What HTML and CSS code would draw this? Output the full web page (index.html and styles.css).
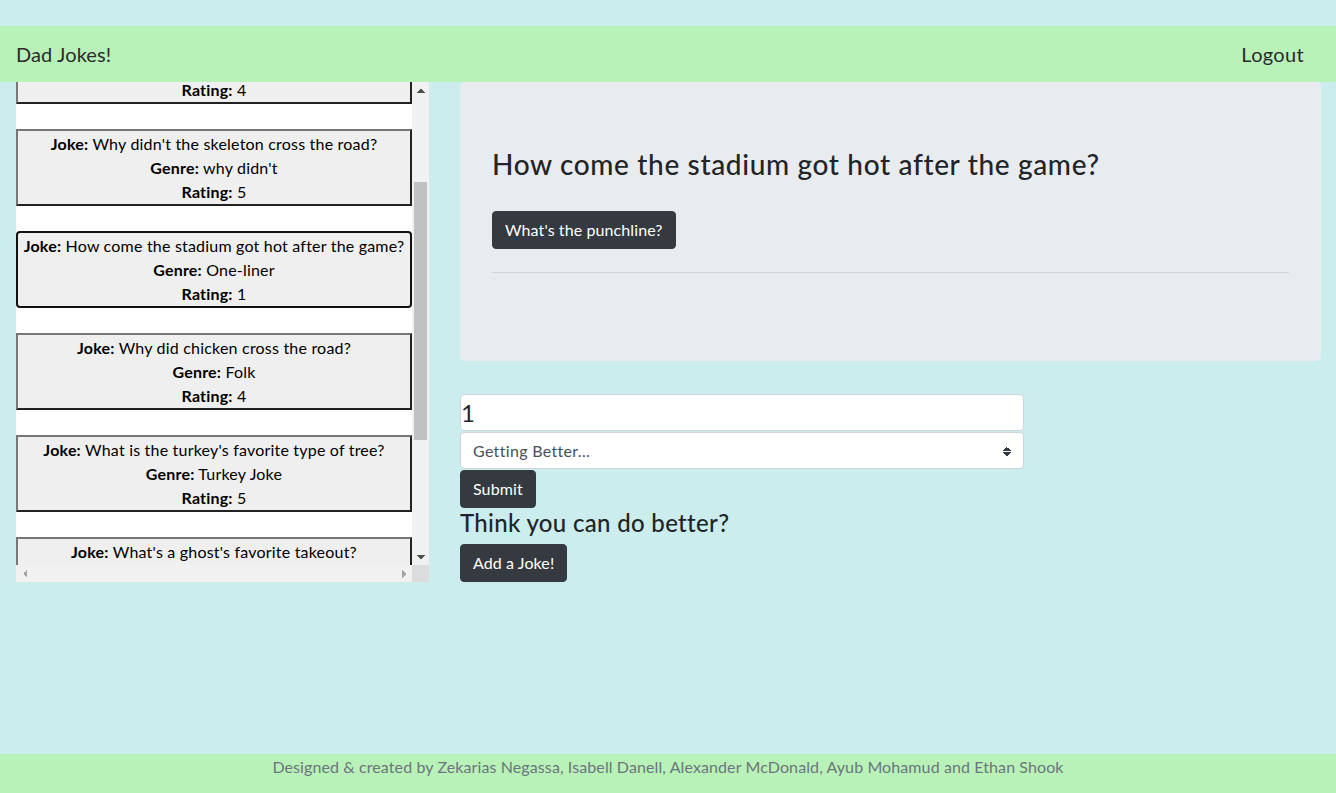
FILE: index.html
```html
<!DOCTYPE html>
<html lang="en">
<head>
<meta charset="utf-8">
<title>Dad Jokes!</title>
<link rel="stylesheet" href="styles.css">
</head>
<body>
<nav class="navbar">
  <a class="brand" href="#">Dad Jokes!</a>
  <a class="nav-link" href="#">Logout</a>
</nav>
<main class="page">
  <section class="list-box">
    <div class="joke-list" id="jokeList">
      <div class="joke-list-inner">
        <div class="joke-card">
          <div><b>Joke:</b> What do you call a fake noodle?</div>
          <div><b>Genre:</b> Pun</div>
          <div><b>Rating:</b> 4</div>
        </div>
        <div class="joke-card">
          <div><b>Joke:</b> Why didn't the skeleton cross the road?</div>
          <div><b>Genre:</b> why didn't</div>
          <div><b>Rating:</b> 5</div>
        </div>
        <div class="joke-card active">
          <div><b>Joke:</b> How come the stadium got hot after the game?</div>
          <div><b>Genre:</b> One-liner</div>
          <div><b>Rating:</b> 1</div>
        </div>
        <div class="joke-card">
          <div><b>Joke:</b> Why did chicken cross the road?</div>
          <div><b>Genre:</b> Folk</div>
          <div><b>Rating:</b> 4</div>
        </div>
        <div class="joke-card">
          <div><b>Joke:</b> What is the turkey's favorite type of tree?</div>
          <div><b>Genre:</b> Turkey Joke</div>
          <div><b>Rating:</b> 5</div>
        </div>
        <div class="joke-card">
          <div><b>Joke:</b> What's a ghost's favorite takeout?</div>
          <div><b>Genre:</b> Halloween</div>
          <div><b>Rating:</b> 3</div>
        </div>
        <div class="joke-card">
          <div><b>Joke:</b> Why don't eggs tell jokes?</div>
          <div><b>Genre:</b> Pun</div>
          <div><b>Rating:</b> 3</div>
        </div>
      </div>
    </div>
    <div class="vscroll">
      <span class="sb-btn up"></span>
      <div class="vtrack"><div class="vthumb"></div></div>
      <span class="sb-btn down"></span>
    </div>
    <div class="hscroll">
      <span class="sb-btn left"></span>
      <div class="htrack"></div>
      <span class="sb-btn right"></span>
    </div>
    <div class="sb-corner"></div>
  </section>
  <section class="detail">
    <div class="jumbotron">
      <h1 class="joke-title">How come the stadium got hot after the game?</h1>
      <button class="btn">What's the punchline?</button>
      <hr class="divider">
    </div>
    <form class="rate-form">
      <input class="rating-input" type="text" value="1">
      <select class="rating-select">
        <option>Getting Better...</option>
      </select>
      <button class="btn" type="button">Submit</button>
    </form>
    <h3 class="better">Think you can do better?</h3>
    <button class="btn">Add a Joke!</button>
  </section>
</main>
<footer class="footer">Designed &amp; created by Zekarias Negassa, Isabell Danell, Alexander McDonald, Ayub Mohamud and Ethan Shook</footer>
<script src="script.js"></script>
</body>
</html>
```

FILE: styles.css
```css
* { box-sizing: border-box; }

html, body { height: 100%; }

body {
  margin: 0;
  min-height: 100vh;
  display: flex;
  flex-direction: column;
  background: #cbeded;
  color: #212529;
  font-family: Lato, "Open Sans", sans-serif;
  font-size: 16px;
  line-height: 24px;
  letter-spacing: 0.02em;
}

.navbar {
  margin-top: 26px;
  height: 56px;
  background: #b8f2b8;
  display: flex;
  align-items: center;
  justify-content: space-between;
  padding: 0 32px 0 16px;
  flex-shrink: 0;
}

.brand, .nav-link {
  font-size: 20px;
  line-height: 30px;
  color: #2b2b2b;
  text-decoration: none;
}

.brand { letter-spacing: 0.1px; }

.page {
  flex: 1;
  display: grid;
  grid-template-columns: 413px 1fr;
  column-gap: 31px;
  padding: 0 15px 0 16px;
  align-items: start;
}

/* joke list with its scrollbars */
.list-box {
  display: grid;
  grid-template-columns: 396px 17px;
  grid-template-rows: 483px 17px;
  background: #fff;
}

.joke-list {
  overflow: hidden;
}

.joke-list-inner {
  padding: 100px 0 26px;
}

.joke-card {
  height: 77px;
  margin-bottom: 25px;
  padding-top: 1px;
  background: #efefef;
  border: 2px solid;
  border-color: #767676 #222 #222 #767676;
  text-align: center;
  color: #000;
  line-height: 24px;
  letter-spacing: 0.2px;
}

.joke-card b { font-weight: 700; }

.joke-card.active {
  border-color: #111;
  border-radius: 4px;
}

.vscroll {
  display: flex;
  flex-direction: column;
  background: #f1f1f1;
}

.vtrack {
  flex: 1;
  padding: 0 2px;
}

.vthumb {
  margin-top: 83px;
  height: 258px;
  background: #c1c1c1;
}

.hscroll {
  display: flex;
  background: #f1f1f1;
}

.htrack { flex: 1; }

.sb-corner { background: #dcdcdc; }

.sb-btn {
  display: block;
  width: 17px;
  height: 17px;
  flex-shrink: 0;
  background-repeat: no-repeat;
  background-position: center;
}

.sb-btn.up {
  background-image: conic-gradient(from 135deg at 50% 0, #505050 90deg, transparent 0);
  background-size: 8px 4px;
}

.sb-btn.down {
  background-image: conic-gradient(from -45deg at 50% 100%, #505050 90deg, transparent 0);
  background-size: 8px 4px;
}

.sb-btn.left {
  background-image: conic-gradient(from 45deg at 0 50%, #a3a3a3 90deg, transparent 0);
  background-size: 4px 8px;
}

.sb-btn.right {
  background-image: conic-gradient(from 225deg at 100% 50%, #a3a3a3 90deg, transparent 0);
  background-size: 4px 8px;
}

/* right column */
.detail {
  display: flex;
  flex-direction: column;
  align-items: flex-start;
}

.jumbotron {
  align-self: stretch;
  height: 279px;
  background: #e9ecef;
  border-radius: 5px;
  padding: 65px 32px 0;
}

.joke-title {
  margin: 0 0 30px;
  font-size: 28px;
  line-height: 34px;
  font-weight: 500;
  letter-spacing: 0.65px;
  color: #212529;
}

.btn {
  display: inline-block;
  height: 38px;
  padding: 6px 12px;
  font-family: inherit;
  font-size: 16px;
  line-height: 24px;
  letter-spacing: 0.1px;
  color: #fff;
  background: #343a40;
  border: 1px solid #343a40;
  border-radius: 4px;
}

.divider {
  margin: 23px 0 0;
  border: 0;
  border-top: 1px solid rgba(0, 0, 0, 0.1);
}

.rate-form {
  margin-top: 33px;
  display: flex;
  flex-direction: column;
  align-items: flex-start;
  width: 564px;
}

.rating-input {
  width: 100%;
  height: 37px;
  padding: 0 0 0 0;
  font-family: inherit;
  font-size: 24px;
  color: #212529;
  background: #fff;
  border: 1px solid #ced4da;
  border-radius: 4px;
  margin-bottom: 1px;
}

.rating-select {
  width: 100%;
  height: 37px;
  padding: 0 28px 0 12px;
  font-family: inherit;
  font-size: 16px;
  letter-spacing: 0.02em;
  color: #495057;
  border: 1px solid #ced4da;
  border-radius: 4px;
  appearance: none;
  -webkit-appearance: none;
  background-color: #fff;
  background-image:
    conic-gradient(from 135deg at 50% 0, #343a40 90deg, transparent 0),
    conic-gradient(from -45deg at 50% 100%, #343a40 90deg, transparent 0);
  background-size: 8px 4px, 8px 4px;
  background-repeat: no-repeat;
  background-position: right 12px top 14px, right 12px top 19px;
  margin-bottom: 1px;
}

.better {
  margin: 0 0 7px;
  font-size: 24px;
  line-height: 29px;
  font-weight: 500;
  color: #212529;
}

.footer {
  flex-shrink: 0;
  height: 39px;
  padding-top: 1px;
  background: #b8f2b8;
  color: #6c757d;
  text-align: center;
  line-height: 24px;
  letter-spacing: 0.1px;
}
```

FILE: script.js
```js
document.getElementById('jokeList').scrollTop = 155;
```
